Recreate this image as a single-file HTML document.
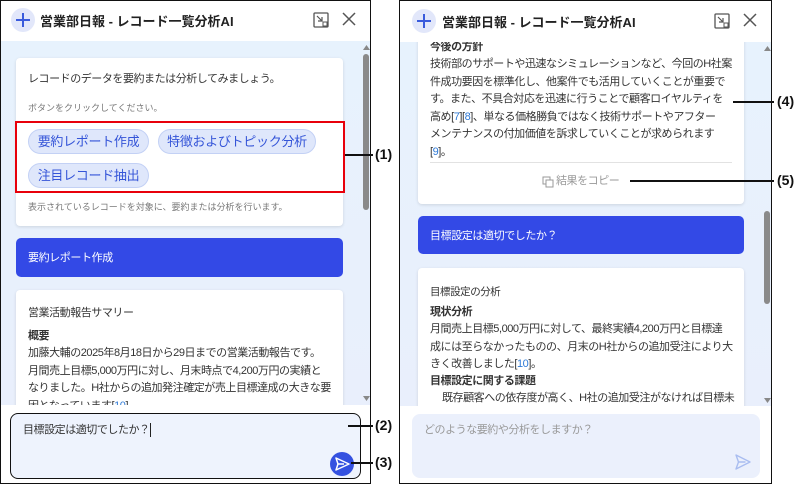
<!DOCTYPE html><html><head><meta charset="utf-8"><style>
*{margin:0;padding:0;box-sizing:border-box}
body{width:800px;height:485px;background:#fff;position:relative;overflow:hidden;font-family:"Liberation Sans","Noto Sans CJK JP",sans-serif;color:#333}
.a{position:absolute}
.panel{position:absolute;top:0;height:484px;border:1px solid #111;background:#fff;overflow:hidden}
.content{position:absolute;left:0;top:40px;width:100%;height:364px;background:linear-gradient(180deg,#e7f2fd,#e9effc);overflow:hidden}
.card{position:absolute;background:#fff;border-radius:4px;box-shadow:0 1px 3px rgba(0,0,0,.12)}
.t{position:absolute;white-space:nowrap;font-size:11px;letter-spacing:-0.45px;line-height:17.6px;color:#333}
.pill{position:absolute;height:25px;border-radius:13px;background:#dfe7fb;border:1px solid #c3d1f5;color:#3555d8;font-size:13px;line-height:23px;text-align:center;letter-spacing:-0.3px}
.blue{position:absolute;background:#3349e6;border-radius:5px;color:#fff;font-size:11px;letter-spacing:-0.4px}
.lnk{color:#2f7ad6}
.lab{position:absolute;font-weight:bold;font-size:14px;color:#111}
.ln{position:absolute;height:2px;background:#111}
.title{position:absolute;left:39px;top:10px;font-weight:bold;font-size:13px;color:#222}
.sb{position:absolute;width:6px;border-radius:3px;background:#8a8a8a}
.sm{font-size:9px!important;letter-spacing:0!important;color:#777!important}
</style></head><body>

<!-- LEFT PANEL -->
<div class="panel" style="left:0;width:371px">
 <svg class="a" style="left:10px;top:7px" width="24" height="24"><circle cx="12" cy="12" r="12" fill="#e2e7fa"/><path d="M12 5v14M5 12h14" stroke="#3a5bdc" stroke-width="2"/></svg>
 <div class="title">営業部日報 - レコード一覧分析AI</div>
 <svg class="a" style="left:312px;top:11px" width="16" height="16"><rect x="1" y="1" width="14" height="14" rx="1" fill="none" stroke="#555" stroke-width="1.3"/><path d="M4 4l5 5M9 5v4H5" fill="none" stroke="#555" stroke-width="1.2"/><rect x="10" y="10" width="4" height="4" fill="#fff" stroke="#555"/></svg>
 <svg class="a" style="left:340px;top:10px" width="16" height="16"><path d="M2 2l12 12M14 2L2 14" stroke="#555" stroke-width="1.5"/></svg>
 <div class="content">
  <div class="card" style="left:15px;top:17px;width:327px;height:168px"></div>
  <div class="t" style="left:27px;top:30px">レコードのデータを要約または分析してみましょう。</div>
  <div class="t sm" style="left:27px;top:59px">ボタンをクリックしてください。</div>
  <div class="pill" style="left:27px;top:88px;width:121px">要約レポート作成</div>
  <div class="pill" style="left:157px;top:88px;width:158px">特徴およびトピック分析</div>
  <div class="pill" style="left:27px;top:122px;width:121px">注目レコード抽出</div>
  <div class="t sm" style="left:27px;top:158px">表示されているレコードを対象に、要約または分析を行います。</div>
  <div class="blue" style="left:15px;top:197px;width:327px;height:39px;padding:11px 12px">要約レポート作成</div>
  <div class="card" style="left:15px;top:249px;width:327px;height:140px"></div>
  <div class="t" style="left:27px;top:264px">営業活動報告サマリー</div>
  <div class="t" style="left:27px;top:287px;font-weight:bold">概要</div>
  <div class="t" style="left:27px;top:304px">加藤大輔の2025年8月18日から29日までの営業活動報告です。<br>月間売上目標5,000万円に対し、月末時点で4,200万円の実績と<br>なりました。H社からの追加発注確定が売上目標達成の大きな要<br>因となっています[<span class="lnk">10</span>]。</div>
  <div class="sb" style="left:362px;top:13px;height:156px"></div>
  <svg class="a" style="left:362px;top:4px" width="7" height="6"><path d="M0 5L3.5 0L7 5z" fill="#888"/></svg>
  <svg class="a" style="left:362px;top:355px" width="7" height="6"><path d="M0 0L3.5 5L7 0z" fill="#888"/></svg>
 </div>
 <div class="a" style="left:9px;top:412px;width:351px;height:66px;border:1px solid #111;border-radius:8px;background:#eef3fd"></div>
 <div class="t" style="left:22px;top:421px">目標設定は適切でしたか？<span style="display:inline-block;width:1px;height:14px;background:#222;vertical-align:middle"></span></div>
 <svg class="a" style="left:329px;top:451px" width="24" height="24"><circle cx="12" cy="12" r="12" fill="#3451e0"/><path d="M6 6l13 6-13 6 2-6z M8 12h6" fill="none" stroke="#fff" stroke-width="1.5" stroke-linejoin="round"/></svg>
</div>

<!-- RIGHT PANEL -->
<div class="panel" style="left:399px;width:373px">
 <svg class="a" style="left:12px;top:8px" width="24" height="24"><circle cx="12" cy="12" r="12" fill="#e2e7fa"/><path d="M12 5v14M5 12h14" stroke="#3a5bdc" stroke-width="2"/></svg>
 <div class="title" style="left:42px;top:11px">営業部日報 - レコード一覧分析AI</div>
 <svg class="a" style="left:314px;top:12px" width="16" height="16"><rect x="1" y="1" width="14" height="14" rx="1" fill="none" stroke="#555" stroke-width="1.3"/><path d="M4 4l5 5M9 5v4H5" fill="none" stroke="#555" stroke-width="1.2"/><rect x="10" y="10" width="4" height="4" fill="#fff" stroke="#555"/></svg>
 <svg class="a" style="left:342px;top:11px" width="16" height="16"><path d="M2 2l12 12M14 2L2 14" stroke="#555" stroke-width="1.5"/></svg>
 <div class="content" style="top:41px">
  <div class="card" style="left:18px;top:-10px;width:326px;height:172px"></div>
  <div class="t" style="left:30px;top:-3px;font-weight:bold">今後の方針</div>
  <div class="t" style="left:30px;top:14px">技術部のサポートや迅速なシミュレーションなど、今回のH社案<br>件成功要因を標準化し、他案件でも活用していくことが重要で<br>す。また、不具合対応を迅速に行うことで顧客ロイヤルティを<br>高め[<span class="lnk">7</span>][<span class="lnk">8</span>]、単なる価格勝負ではなく技術サポートやアフター<br>メンテナンスの付加価値を訴求していくことが求められます<br>[<span class="lnk">9</span>]。</div>
  <div class="a" style="left:30px;top:120px;width:302px;height:1px;background:#e2e2e2"></div>
  <svg class="a" style="left:142px;top:134px" width="12" height="12"><rect x="1" y="1" width="7" height="7" fill="none" stroke="#999"/><rect x="4" y="4" width="7" height="7" fill="#fff" stroke="#999"/></svg>
  <div class="t" style="left:156px;top:131px;color:#999">結果をコピー</div>
  <div class="blue" style="left:18px;top:174px;width:326px;height:38px;padding:11px 12px">目標設定は適切でしたか？</div>
  <div class="card" style="left:18px;top:226px;width:326px;height:160px"></div>
  <div class="t" style="left:30px;top:242px;font-size:10.5px">目標設定の分析</div>
  <div class="t" style="left:30px;top:262px;font-weight:bold">現状分析</div>
  <div class="t" style="left:30px;top:279px">月間売上目標5,000万円に対して、最終実績4,200万円と目標達<br>成には至らなかったものの、月末のH社からの追加受注により大<br>きく改善しました[<span class="lnk">10</span>]。</div>
  <div class="t" style="left:30px;top:331px;font-weight:bold">目標設定に関する課題</div>
  <div class="t" style="left:42px;top:348px">既存顧客への依存度が高く、H社の追加受注がなければ目標未<br>達となる状況[<span class="lnk">10</span>]</div>
  <div class="sb" style="left:364px;top:169px;height:93px"></div>
  <svg class="a" style="left:364px;top:4px" width="7" height="6"><path d="M0 5L3.5 0L7 5z" fill="#888"/></svg>
  <svg class="a" style="left:364px;top:356px" width="7" height="6"><path d="M0 0L3.5 5L7 0z" fill="#888"/></svg>
 </div>
 <div class="a" style="left:12px;top:413px;width:348px;height:64px;border-radius:8px;background:#ebf0fc"></div>
 <div class="t" style="left:24px;top:421px;color:#999">どのような要約や分析をしますか？</div>
 <svg class="a" style="left:334px;top:452px" width="18" height="18"><path d="M2 2l14 7-14 7 2.5-7z M4.5 9h7" fill="none" stroke="#a9bdf0" stroke-width="1.4" stroke-linejoin="round"/></svg>
</div>

<!-- annotations -->
<div class="a" style="left:15px;top:121px;width:330px;height:72px;border:2px solid #e8000b"></div>
<div class="ln" style="left:345px;top:154px;width:28px"></div>
<div class="lab" style="left:375px;top:146px">(1)</div>
<div class="ln" style="left:348px;top:425px;width:25px"></div>
<div class="lab" style="left:375px;top:417px">(2)</div>
<div class="ln" style="left:351px;top:462px;width:22px"></div>
<div class="lab" style="left:375px;top:454px">(3)</div>
<div class="ln" style="left:733px;top:101px;width:41px"></div>
<div class="lab" style="left:777px;top:93px">(4)</div>
<div class="ln" style="left:630px;top:180px;width:144px"></div>
<div class="lab" style="left:777px;top:172px">(5)</div>
</body></html>
